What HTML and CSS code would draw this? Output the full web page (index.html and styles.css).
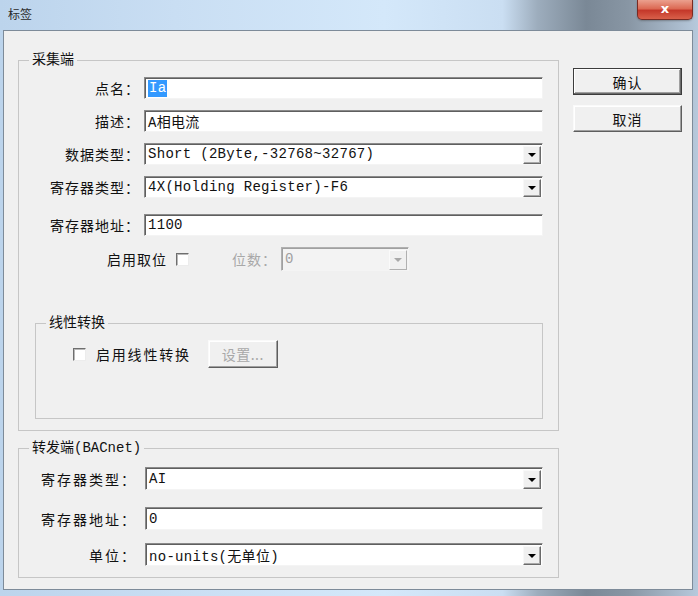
FILE: index.html
```html
<!DOCTYPE html>
<html lang="zh-CN">
<head>
<meta charset="utf-8">
<title>标签</title>
<link rel="stylesheet" href="styles.css">
</head>
<body>
<div class="window">
  <div class="titlebar">
    <span class="title">标签</span>
    <div class="close">x</div>
  </div>
  <div class="frame">
    <div class="client">
      <div class="main">
        <fieldset class="group g1">
          <legend>采集端</legend>
          <div class="row">
            <label>点名：</label>
            <div class="field"><span class="sel">Ia</span></div>
          </div>
          <div class="row gap">
            <label>描述：</label>
            <div class="field">A相电流</div>
          </div>
          <div class="row gap">
            <label>数据类型：</label>
            <div class="field combo"><span class="val">Short (2Byte,-32768~32767)</span><span class="arrow"><i></i></span></div>
          </div>
          <div class="row gap">
            <label>寄存器类型：</label>
            <div class="field combo"><span class="val">4X(Holding Register)-F6</span><span class="arrow"><i></i></span></div>
          </div>
          <div class="row gap-lg">
            <label>寄存器地址：</label>
            <div class="field">1100</div>
          </div>
          <div class="bitrow">
            <span class="txt">启用取位</span>
            <span class="check"></span>
            <span class="txt dis">位数：</span>
            <div class="field combo disabled small"><span class="val">0</span><span class="arrow"><i></i></span></div>
          </div>
          <fieldset class="group lin">
            <legend>线性转换</legend>
            <div class="linrow">
              <span class="check"></span>
              <span class="txt">启用线性转换</span>
              <button class="btn disabled-btn" disabled>设置...</button>
            </div>
          </fieldset>
        </fieldset>
        <fieldset class="group g2">
          <legend>转发端(BACnet)</legend>
          <div class="row r2">
            <label>寄存器类型：</label>
            <div class="field combo"><span class="val">AI</span><span class="arrow"><i></i></span></div>
          </div>
          <div class="row r2 g2a">
            <label>寄存器地址：</label>
            <div class="field">0</div>
          </div>
          <div class="row r2 g2b">
            <label>单位：</label>
            <div class="field combo"><span class="val">no-units(无单位)</span><span class="arrow"><i></i></span></div>
          </div>
        </fieldset>
      </div>
      <div class="buttons">
        <button class="btn default">确认</button>
        <button class="btn">取消</button>
      </div>
    </div>
  </div>
</div>
</body>
</html>
```
FILE: styles.css
```css
* { box-sizing: border-box; }
html, body { margin: 0; padding: 0; }
body {
  font-family: "Noto Sans CJK SC", sans-serif;
  font-size: 14px;
  color: #111;
  background: #c8ddf2;
}
.window {
  width: 698px;
  height: 596px;
  display: flex;
  flex-direction: column;
  background: linear-gradient(90deg, #bcd4ec 0%, #c9def3 25%, #d4e8fa 55%, #cadef2 72%, #9dadbd 77%, #7a8896 84%, #8896a4 90%, #b7c9dc 100%);
}
.titlebar {
  height: 30px;
  display: flex;
  align-items: flex-start;
  padding-left: 8px;
}
.title {
  font-size: 12px;
  line-height: 28px;
  color: #2a2a2a;
}
.close {
  margin-left: auto;
  margin-right: 5px;
  width: 56px;
  height: 20px;
  border: 1px solid #7a2a22;
  border-top: none;
  border-radius: 0 0 5px 5px;
  background: linear-gradient(180deg, #eba08e 0%, #dc6a54 45%, #c4382a 55%, #d9604a 100%);
  color: #fff;
  font-family: "DejaVu Sans", sans-serif;
  font-weight: bold;
  font-size: 13px;
  line-height: 17px;
  text-align: center;
  box-shadow: 0 1px 2px rgba(60, 60, 60, 0.4);
}
.frame {
  flex: 1;
  display: flex;
  padding: 0 5px 6px 3px;
}
.client {
  flex: 1;
  display: flex;
  background: #f0f0f0;
  border: 1px solid #7d8b99;
}
.main {
  padding-left: 14px;
  padding-top: 19px;
}
.group {
  margin: 0;
  border: 1px solid #c6c6c6;
  min-width: 0;
}
.group legend {
  padding: 0 3px;
  margin-left: 10px;
  line-height: 20px;
  font-family: "Liberation Mono", "Noto Sans CJK SC", monospace;
  font-size: 14px;
}
.g1 {
  width: 541px;
  padding: 7px 15px 11px 0;
}
.g2 {
  width: 541px;
  margin-top: 7px;
  padding: 9px 15px 11px 0;
}
.row {
  display: flex;
  align-items: center;
  height: 22px;
}
.row.gap { margin-top: 11px; }
.row.gap-lg { margin-top: 16px; }
.row label {
  width: 121px;
  margin-right: 4px;
  text-align: right;
  letter-spacing: 1px;
  white-space: nowrap;
}
.r2 { height: 23px; }
.r2 label {
  width: 118px;
  margin-right: 8px;
  letter-spacing: 2px;
}
.g2a { margin-top: 17px; }
.g2b { margin-top: 13px; }
.field {
  flex: 1;
  height: 100%;
  display: flex;
  align-items: center;
  background: #fff;
  border: 1px solid;
  border-color: #8a8a8a #f4f4f4 #f4f4f4 #8a8a8a;
  box-shadow: inset 1px 1px 0 #5f5f5f;
  padding-left: 3px;
  font-family: "Liberation Mono", "Noto Sans CJK SC", monospace;
  font-size: 14px;
  letter-spacing: 0.3px;
  color: #111;
  white-space: nowrap;
  overflow: hidden;
}
.sel {
  background: #3399ff;
  color: #fff;
  height: 17px;
  line-height: 17px;
  padding: 0 1px;
}
.combo { padding-right: 1px; }
.combo .val { flex: 1; }
.arrow {
  width: 18px;
  height: calc(100% - 2px);
  align-self: flex-end;
  display: flex;
  align-items: center;
  justify-content: center;
  background: #f0f0f0;
  border: 1px solid;
  border-color: #f8f8f8 #6a6a6a #6a6a6a #f8f8f8;
  box-shadow: inset -1px -1px 0 #a8a8a8;
}
.arrow i {
  width: 0;
  height: 0;
  border-left: 4px solid transparent;
  border-right: 4px solid transparent;
  border-top: 4px solid #000;
}
.bitrow {
  margin-top: 11px;
  height: 24px;
  display: flex;
  align-items: center;
  padding-left: 88px;
}
.txt { letter-spacing: 1px; white-space: nowrap; }
.txt.dis { color: #a8a8a8; margin-left: 43px; margin-right: 4px; }
.check {
  width: 13px;
  height: 13px;
  background: #fff;
  border: 1px solid;
  border-color: #6e6e6e #ececec #ececec #6e6e6e;
  box-shadow: inset 1px 1px 0 #b8b8b8;
  flex: none;
}
.bitrow .check { margin-left: 9px; }
.field.small { flex: none; width: 128px; }
.field.disabled {
  background: #f3f3f3;
  color: #a0a0a0;
  border-color: #b0b0b0 #f4f4f4 #f4f4f4 #b0b0b0;
  box-shadow: inset 1px 1px 0 #a0a0a0;
}
.field.disabled .arrow {
  border-color: #fafafa #b0b0b0 #b0b0b0 #fafafa;
  box-shadow: none;
}
.field.disabled .arrow i { border-top-color: #a8a8a8; }
.lin {
  margin: 42px 0 0 16px;
  height: 106px;
  padding: 7px 0 0 0;
}
.linrow {
  display: flex;
  align-items: center;
  height: 28px;
  padding-left: 37px;
}
.linrow .txt { margin-left: 10px; letter-spacing: 1.8px; }
.btn {
  font-family: "Noto Sans CJK SC", sans-serif;
  font-size: 14px;
  color: #111;
  background: #f0f0f0;
  border: 1px solid;
  border-color: #fafafa #5e5e5e #5e5e5e #fafafa;
  box-shadow: inset -1px -1px 0 #a0a0a0, inset 1px 1px 0 #fff;
  padding: 0;
  letter-spacing: 1px;
}
.disabled-btn {
  margin-left: 17px;
  width: 70px;
  height: 28px;
  color: #a8a8a8;
  letter-spacing: 0.5px;
}
.buttons {
  margin-left: 14px;
  padding-top: 37px;
  display: flex;
  flex-direction: column;
  gap: 10px;
}
.buttons .btn {
  width: 109px;
  height: 27px;
}
.btn.default {
  border: 1px solid #3c3c3c;
  box-shadow: inset -1px -1px 0 #6a6a6a, inset 1px 1px 0 #fff, inset -2px -2px 0 #a0a0a0;
}
```
